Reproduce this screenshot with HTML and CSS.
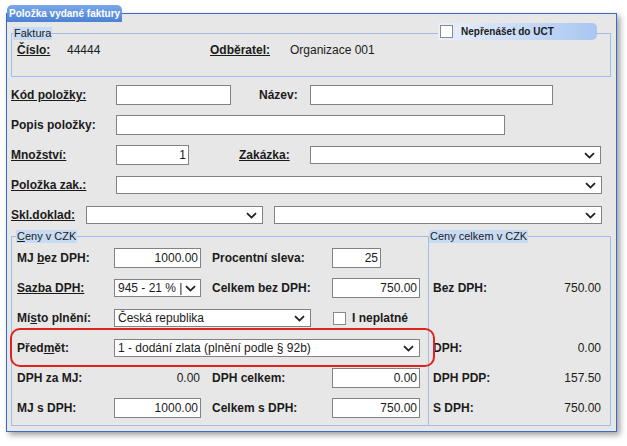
FILE: index.html
```html
<!DOCTYPE html>
<html lang="cs">
<head>
<meta charset="utf-8">
<title>Položka vydané faktury</title>
<link rel="stylesheet" href="styles.css">
</head>
<body>
<fieldset class="window">
  <legend class="win-title">Položka vydané faktury</legend>

  <div class="faktura-wrap">
    <fieldset class="group faktura">
      <legend class="group-legend">Faktura</legend>
      <div class="info-row">
        <span class="lbl u w50">Číslo:</span>
        <span class="w143">44444</span>
        <span class="lbl u w80">Odběratel:</span>
        <span>Organizace 001</span>
      </div>
    </fieldset>
    <div class="ucttab"><span class="cb"></span><span class="lbl">Nepřenášet do UCT</span></div>
  </div>

  <div class="frow first">
    <span class="lbl u flbl">Kód položky:</span>
    <input class="inp w115" type="text" value="">
    <span class="lbl nazev">Název:</span>
    <input class="inp w243" type="text" value="">
  </div>
  <div class="frow">
    <span class="lbl flbl">Popis položky:</span>
    <input class="inp w389" type="text" value="">
  </div>
  <div class="frow">
    <span class="lbl u flbl">Množství:</span>
    <input class="inp num w73" type="text" value="1">
    <span class="lbl u zakazka">Zakázka:</span>
    <div class="sel w291"><span></span><svg viewBox="0 0 11 7"><path d="M1 1.2 L5.5 5.6 L10 1.2" fill="none" stroke="#1e1e1e" stroke-width="1.8"/></svg></div>
  </div>
  <div class="frow">
    <span class="lbl u flbl">Položka zak.:</span>
    <div class="sel w486"><span></span><svg viewBox="0 0 11 7"><path d="M1 1.2 L5.5 5.6 L10 1.2" fill="none" stroke="#1e1e1e" stroke-width="1.8"/></svg></div>
  </div>
  <div class="frow">
    <span class="lbl u sklbl">Skl.doklad:</span>
    <div class="sel w177"><span></span><svg viewBox="0 0 11 7"><path d="M1 1.2 L5.5 5.6 L10 1.2" fill="none" stroke="#1e1e1e" stroke-width="1.8"/></svg></div>
    <div class="sel w328 ml11"><span></span><svg viewBox="0 0 11 7"><path d="M1 1.2 L5.5 5.6 L10 1.2" fill="none" stroke="#1e1e1e" stroke-width="1.8"/></svg></div>
  </div>

  <div class="ceny">
    <fieldset class="group ceny-left">
      <legend class="group-legend"><u>C</u>eny v CZK</legend>
      <div class="crow first">
        <span class="lbl clbl">MJ <u>b</u>ez DPH:</span>
        <input class="inp num w87" type="text" value="1000.00">
        <span class="lbl clbl2">Procentní sleva:</span>
        <input class="inp num w49" type="text" value="25">
      </div>
      <div class="crow">
        <span class="lbl u clbl">Sazba DPH:</span>
        <div class="sel w87"><span>945 - 21 % |</span><svg viewBox="0 0 11 7"><path d="M1 1.2 L5.5 5.6 L10 1.2" fill="none" stroke="#1e1e1e" stroke-width="1.8"/></svg></div>
        <span class="lbl clbl2">Celkem bez DPH:</span>
        <input class="inp num w88" type="text" value="750.00">
      </div>
      <div class="crow">
        <span class="lbl clbl">Mí<u>s</u>to plnění:</span>
        <div class="sel w197"><span>Česká republika</span><svg viewBox="0 0 11 7"><path d="M1 1.2 L5.5 5.6 L10 1.2" fill="none" stroke="#1e1e1e" stroke-width="1.8"/></svg></div>
        <span class="cb cb-neplatne"></span>
        <span class="lbl neplatne">I neplatné</span>
      </div>
      <div class="crow predmet">
        <span class="lbl clbl">Před<u>m</u>ět:</span>
        <div class="sel w306"><span>1 - dodání zlata (plnění podle § 92b)</span><svg viewBox="0 0 11 7"><path d="M1 1.2 L5.5 5.6 L10 1.2" fill="none" stroke="#1e1e1e" stroke-width="1.8"/></svg></div>
      </div>
      <div class="crow">
        <span class="lbl clbl">DPH za MJ:</span>
        <span class="val w87">0.00</span>
        <span class="lbl clbl2">DPH celkem:</span>
        <input class="inp num w88" type="text" value="0.00">
      </div>
      <div class="crow">
        <span class="lbl clbl">MJ s DPH:</span>
        <input class="inp num w87" type="text" value="1000.00">
        <span class="lbl clbl2">Celkem s DPH:</span>
        <input class="inp num w88" type="text" value="750.00">
      </div>
    </fieldset>

    <fieldset class="group ceny-right">
      <legend class="group-legend">Ceny celkem v CZK</legend>
      <div class="rrow first"></div>
      <div class="rrow"><span class="lbl">Bez DPH:</span><span>750.00</span></div>
      <div class="rrow"></div>
      <div class="rrow"><span class="lbl">DPH:</span><span>0.00</span></div>
      <div class="rrow"><span class="lbl">DPH PDP:</span><span>157.50</span></div>
      <div class="rrow"><span class="lbl">S DPH:</span><span>750.00</span></div>
    </fieldset>
  </div>
</fieldset>
</body>
</html>
```

FILE: styles.css
```css
* { box-sizing: border-box; }

html, body {
  margin: 0;
  background: #ffffff;
}

body {
  width: 627px;
  height: 446px;
  overflow: hidden;
  font-family: "Liberation Sans", Arial, sans-serif;
  font-size: 12px;
  color: #1b1b1b;
}

/* window */
.window {
  margin: 5px 0 0 6px;
  width: 611px;
  min-width: 0;
  padding: 0 5px 5px 4px;
  border: 1px solid #3a6cc6;
  background: #e7e7e7;
  box-shadow: 3px 3px 6px rgba(0, 0, 0, 0.38);
}

.win-title {
  margin-left: -4px;
  padding: 0 2px;
  height: 17px;
  line-height: 17px;
  font-size: 10px;
  font-weight: bold;
  color: #ffffff;
  background: linear-gradient(#7aa7e8, #4b82d5);
  border-radius: 5px 5px 0 0;
}

/* groups */
.group {
  margin: 0;
  min-width: 0;
  border: 1px solid #a3bde4;
  padding: 0;
}

.group-legend {
  padding: 0 1px;
  height: 13px;
  line-height: 13px;
  font-size: 11px;
  color: #1b1b1b;
  background: #c8dbf5;
}

.faktura-wrap {
  position: relative;
  margin-top: 5px;
}

.faktura {
  padding: 3px 5px 19px 5px;
}

.faktura .group-legend { margin-left: -4px; }

.info-row {
  display: flex;
  height: 14px;
  line-height: 14px;
}

.ucttab {
  position: absolute;
  left: 427px;
  top: -4px;
  width: 159px;
  height: 17px;
  display: flex;
  align-items: center;
  padding-left: 2px;
  font-size: 10px;
  background: linear-gradient(90deg, #e9f0fb 0%, #cfdff7 45%, #a9c6f1 100%);
  border-radius: 0 5px 5px 0;
}

.ucttab .lbl { margin-left: 8px; }

.cb {
  display: inline-block;
  flex: none;
  width: 13px;
  height: 13px;
  border: 1px solid #8a8a8a;
  background: #ffffff;
}

/* text */
.lbl {
  font-weight: bold;
  white-space: nowrap;
}

.u { text-decoration: underline; }

/* rows */
.frow {
  display: flex;
  align-items: center;
  height: 20px;
  margin-top: 10px;
}

.frow.first { margin-top: 8px; }

.flbl { width: 105px; flex: none; }
.sklbl { width: 75px; flex: none; }
.nazev { margin-left: 28px; width: 51px; flex: none; }
.zakazka { margin-left: 50px; width: 71px; flex: none; }
.ml11 { margin-left: 11px; }

.inp {
  flex: none;
  height: 20px;
  margin: 0;
  padding: 0 2px;
  border: 1px solid #828282;
  border-radius: 0;
  background: #ffffff;
  font: inherit;
  color: #1b1b1b;
  outline: none;
}

.num { text-align: right; }

.sel {
  flex: none;
  height: 18px;
  display: flex;
  align-items: center;
  justify-content: space-between;
  padding: 0 5px 0 3px;
  border: 1px solid #828282;
  background: #ffffff;
  overflow: hidden;
  white-space: nowrap;
}

.sel svg {
  flex: none;
  width: 11px;
  height: 7px;
  margin-left: 2px;
}

.val {
  flex: none;
  text-align: right;
  padding-right: 1px;
}

/* widths */
.w49 { width: 49px; }
.w50 { width: 50px; flex: none; }
.w73 { width: 73px; }
.w80 { width: 80px; flex: none; }
.w87 { width: 87px; }
.w88 { width: 88px; }
.w115 { width: 115px; }
.w143 { width: 143px; flex: none; }
.w177 { width: 177px; }
.w197 { width: 197px; }
.w243 { width: 243px; }
.w291 { width: 291px; }
.w306 { width: 306px; }
.w328 { width: 328px; }
.w389 { width: 389px; }
.w486 { width: 486px; }

/* prices */
.ceny {
  display: flex;
  margin-top: 5px;
}

.ceny-left {
  width: 417px;
  flex: none;
  border-right: none;
  padding: 0 0 7px 5px;
}

.ceny-left .group-legend { margin-left: -1px; }

.ceny-right {
  width: 183px;
  flex: none;
  padding: 0 9px 7px 4px;
}

.ceny-right .group-legend { margin-left: -4px; }

.crow,
.rrow {
  display: flex;
  align-items: center;
  height: 20px;
  margin-top: 10px;
}

.crow.first,
.rrow.first { margin-top: 5px; }

.rrow { justify-content: space-between; }

.clbl { width: 97px; flex: none; }
.clbl2 { margin-left: 11px; width: 120px; flex: none; }

.cb-neplatne { margin-left: 22px; }
.neplatne { margin-left: 6px; }

.predmet { position: relative; }

.predmet::before {
  content: "";
  position: absolute;
  left: -7px;
  top: -10px;
  width: 421px;
  height: 35px;
  border: 2px solid #e0221e;
  border-radius: 10px;
  pointer-events: none;
}
```
